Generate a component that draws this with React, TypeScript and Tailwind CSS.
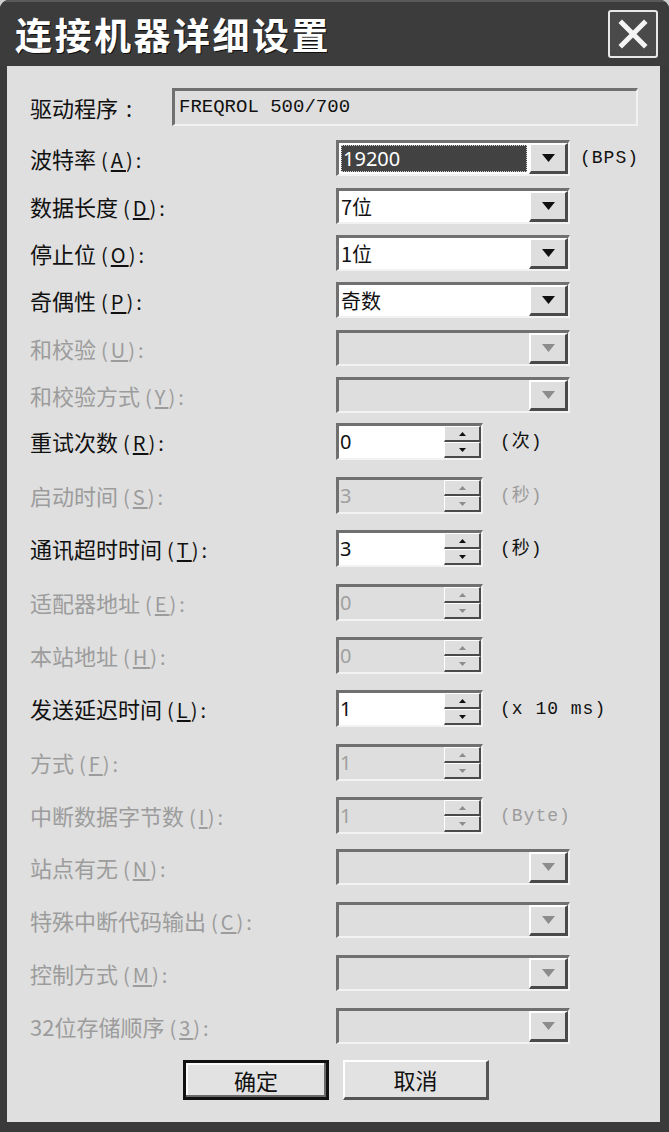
import React from 'react';

type Row = {
  label: string;
  key: string;
  kind: 'combo' | 'spin';
  value?: string;
  on?: boolean;
  focus?: boolean;
  unit?: string;
  h: string;
};

const rows: Row[] = [
  { label: '波特率', key: 'A', kind: 'combo', value: '19200', on: true, focus: true, unit: '(BPS)', h: 'h-[48px]' },
  { label: '数据长度', key: 'D', kind: 'combo', value: '7位', on: true, h: 'h-[47px]' },
  { label: '停止位', key: 'O', kind: 'combo', value: '1位', on: true, h: 'h-[47px]' },
  { label: '奇偶性', key: 'P', kind: 'combo', value: '奇数', on: true, h: 'h-[48px]' },
  { label: '和校验', key: 'U', kind: 'combo', h: 'h-[47px]' },
  { label: '和校验方式', key: 'Y', kind: 'combo', h: 'h-[46px]' },
  { label: '重试次数', key: 'R', kind: 'spin', value: '0', on: true, unit: '(次)', h: 'h-[54px]' },
  { label: '启动时间', key: 'S', kind: 'spin', value: '3', unit: '(秒)', h: 'h-[53px]' },
  { label: '通讯超时时间', key: 'T', kind: 'spin', value: '3', on: true, unit: '(秒)', h: 'h-[54px]' },
  { label: '适配器地址', key: 'E', kind: 'spin', value: '0', h: 'h-[53px]' },
  { label: '本站地址', key: 'H', kind: 'spin', value: '0', h: 'h-[53px]' },
  { label: '发送延迟时间', key: 'L', kind: 'spin', value: '1', on: true, unit: '(x 10 ms)', h: 'h-[54px]' },
  { label: '方式', key: 'F', kind: 'spin', value: '1', h: 'h-[53px]' },
  { label: '中断数据字节数', key: 'I', kind: 'spin', value: '1', unit: '(Byte)', h: 'h-[52px]' },
  { label: '站点有无', key: 'N', kind: 'combo', h: 'h-[53px]' },
  { label: '特殊中断代码输出', key: 'C', kind: 'combo', h: 'h-[53px]' },
  { label: '控制方式', key: 'M', kind: 'combo', h: 'h-[53px]' },
  { label: '32位存储顺序', key: '3', kind: 'combo', h: 'h-[52px]' },
];

const cjk = "font-['Noto_Sans_CJK_SC',sans-serif]";

function Combo({ r }: { r: Row }) {
  return (
    <div className="flex h-[36px] w-[234px] border-t-[3px] border-l-[3px] border-b-2 border-r-2 border-t-[#707070] border-l-[#707070] border-b-[#f2f2f2] border-r-[#f2f2f2]">
      <div className={`flex-1 flex items-center pl-[2px] ${r.on ? 'bg-white' : 'bg-[#dedede]'}`}>
        {r.focus ? (
          <div className="h-[27px] w-[186px] bg-[#424242] border border-dotted border-[#cfcfcf] flex items-center pl-[1px] text-white text-[20px] leading-none">
            {r.value}
          </div>
        ) : (
          <span className={`text-[20px] leading-none text-[#111] ${cjk}`}>{r.value}</span>
        )}
      </div>
      <div className="w-[39px] flex items-center justify-center bg-[#dedede] border-t-2 border-l-2 border-b-[3px] border-r-[3px] border-t-white border-l-white border-b-[#4a4a4a] border-r-[#4a4a4a]">
        <svg width="13" height="8" viewBox="0 0 13 8">
          <path d="M0 0h13L6.5 8z" fill={r.on ? '#111' : '#8c8c8c'} />
        </svg>
      </div>
    </div>
  );
}

function Spin({ r }: { r: Row }) {
  const c = r.on ? '#111' : '#8c8c8c';
  return (
    <div className="flex h-[37px] w-[147px] border-t-[3px] border-l-[3px] border-b-2 border-r-2 border-t-[#707070] border-l-[#707070] border-b-[#f2f2f2] border-r-[#f2f2f2]">
      <div className={`flex-1 flex items-center pl-[1px] text-[20px] leading-none ${r.on ? 'bg-white text-[#111]' : 'bg-[#dedede] text-[#a0a0a0]'}`}>
        {r.value}
      </div>
      <div className="w-[37px] flex flex-col bg-[#dedede]">
        <div className="flex-1 flex items-center justify-center border-t border-l border-b-2 border-r-2 border-t-white border-l-white border-b-[#4a4a4a] border-r-[#4a4a4a]">
          <svg width="7" height="4" viewBox="0 0 7 4"><path d="M3.5 0L7 4H0z" fill={c} /></svg>
        </div>
        <div className="flex-1 flex items-center justify-center border-t border-l border-b-2 border-r-2 border-t-white border-l-white border-b-[#4a4a4a] border-r-[#4a4a4a]">
          <svg width="7" height="4" viewBox="0 0 7 4"><path d="M0 0h7L3.5 4z" fill={c} /></svg>
        </div>
      </div>
    </div>
  );
}

function Label({ r }: { r: Row }) {
  return (
    <div className={`w-[306px] flex items-baseline text-[22px] leading-none ${cjk} ${r.on ? 'text-[#111]' : 'text-[#9c9c9c]'}`}>
      <span>{r.label}</span>
      <span className="ml-[5px] text-[20px] tracking-[3px]">
        (<span className="underline underline-offset-2">{r.key}</span>):
      </span>
    </div>
  );
}

function XpButton({ text, def }: { text: string; def?: boolean }) {
  return (
    <button
      className={`w-[146px] h-[40px] bg-[#e2e2e2] text-[22px] text-[#111] ${cjk} ${
        def
          ? 'border-[3px] border-[#111] shadow-[inset_-2px_-2px_0_#6a6a6a,inset_2px_2px_0_#fafafa]'
          : 'border-t-2 border-l-2 border-b-[3px] border-r-[3px] border-t-white border-l-white border-b-[#555] border-r-[#555]'
      }`}
    >
      {text}
    </button>
  );
}

export default function App() {
  return (
    <div className="w-[669px] h-[1132px] bg-[#cfcfcf]">
      <div className="w-full h-full flex flex-col rounded-t-[9px] overflow-hidden bg-[#3a3a3a]">
        <div className="h-[66px] flex items-center justify-between pl-[15px] pr-[11px] bg-[#3c3c3c] border-t-2 border-[#5a5a5a]">
          <span className={`text-white text-[37px] font-bold leading-none tracking-[2.5px] ${cjk} [text-shadow:1px_1px_0_#111]`}>
            连接机器详细设置
          </span>
          <div className="w-[50px] h-[48px] rounded-[3px] border-2 border-[#e8e8e8] bg-[#4a4a4a] flex items-center justify-center">
            <svg width="30" height="30" viewBox="0 0 30 30">
              <path d="M4 4L26 26M26 4L4 26" stroke="#f4f4f4" strokeWidth="5" strokeLinecap="square" />
            </svg>
          </div>
        </div>
        <div className="flex-1 bg-[#dfdfdf] ml-[7px] mr-[9px] mb-[10px] pt-[22px] pl-[23px] flex flex-col">
          <div className="h-[52px] flex items-start">
            <div className={`h-[38px] flex items-center w-[142px] text-[22px] leading-none text-[#111] ${cjk}`}>
              <span>驱动程序</span>
              <span className="ml-[8px]">:</span>
            </div>
            <div className="h-[38px] w-[466px] flex items-center pl-[4px] bg-[#dedede] border-t-[3px] border-l-[3px] border-b-2 border-r-2 border-t-[#707070] border-l-[#707070] border-b-[#f2f2f2] border-r-[#f2f2f2]">
              <span className="text-[19px] leading-none text-[#111] font-['Liberation_Mono',monospace]">FREQROL 500/700</span>
            </div>
          </div>
          {rows.map((r) => (
            <div key={r.key} className={`${r.h} flex items-start`}>
              <div className={`flex items-center ${r.kind === 'combo' ? 'h-[36px]' : 'h-[37px]'}`}>
                <Label r={r} />
                {r.kind === 'combo' ? <Combo r={r} /> : <Spin r={r} />}
                {r.unit && (
                  <span
                    className={`${r.kind === 'combo' ? 'ml-[10px]' : 'ml-[17px]'} text-[18px] leading-none tracking-[1px] font-['Liberation_Mono','Noto_Sans_CJK_SC',monospace] ${
                      r.on ? 'text-[#111]' : 'text-[#9c9c9c]'
                    }`}
                  >
                    {r.unit}
                  </span>
                )}
              </div>
            </div>
          ))}
          <div className="flex gap-[14px] pl-[153px]">
            <XpButton text="确定" def />
            <XpButton text="取消" />
          </div>
        </div>
      </div>
    </div>
  );
}
